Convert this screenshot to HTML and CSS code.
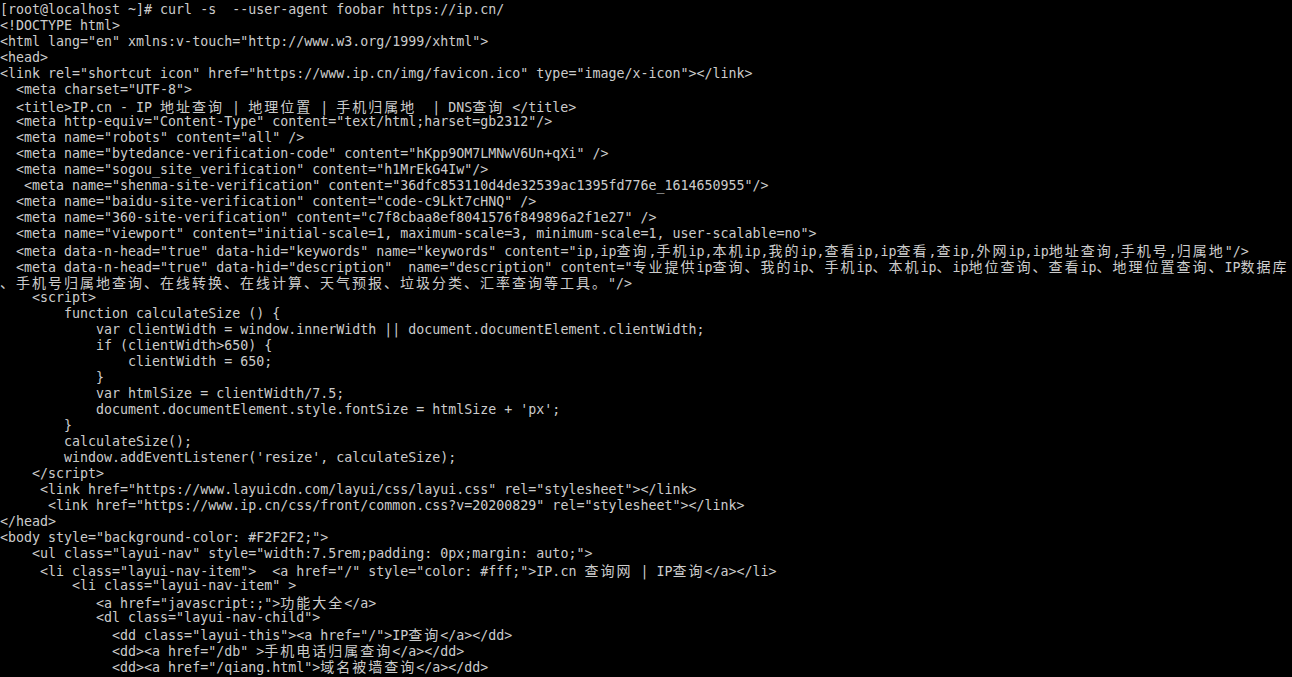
FILE: index.html
```html
<!DOCTYPE html>
<html lang="zh">
<head>
<meta charset="UTF-8">
<title>terminal</title>
<link rel="stylesheet" href="styles.css">
</head>
<body>
<div class="term">
<div class="ln">[root@localhost ~]# curl -s  --user-agent foobar https://ip.cn/</div>
<div class="ln">&lt;!DOCTYPE html&gt;</div>
<div class="ln">&lt;html lang="en" xmlns:v-touch="http://www.w3.org/1999/xhtml"&gt;</div>
<div class="ln">&lt;head&gt;</div>
<div class="ln">&lt;link rel="shortcut icon" href="https://www.ip.cn/img/favicon.ico" type="image/x-icon"&gt;&lt;/link&gt;</div>
<div class="ln">  &lt;meta charset="UTF-8"&gt;</div>
<div class="ln">  &lt;title&gt;IP.cn - IP <span class="w">地址查询</span> | <span class="w">地理位置</span> | <span class="w">手机归属地</span>  | DNS<span class="w">查询</span> &lt;/title&gt;</div>
<div class="ln">  &lt;meta http-equiv="Content-Type" content="text/html;harset=gb2312"/&gt;</div>
<div class="ln">  &lt;meta name="robots" content="all" /&gt;</div>
<div class="ln">  &lt;meta name="bytedance-verification-code" content="hKpp9OM7LMNwV6Un+qXi" /&gt;</div>
<div class="ln">  &lt;meta name="sogou_site_verification" content="h1MrEkG4Iw"/&gt;</div>
<div class="ln">   &lt;meta name="shenma-site-verification" content="36dfc853110d4de32539ac1395fd776e_1614650955"/&gt;</div>
<div class="ln">  &lt;meta name="baidu-site-verification" content="code-c9Lkt7cHNQ" /&gt;</div>
<div class="ln">  &lt;meta name="360-site-verification" content="c7f8cbaa8ef8041576f849896a2f1e27" /&gt;</div>
<div class="ln">  &lt;meta name="viewport" content="initial-scale=1, maximum-scale=3, minimum-scale=1, user-scalable=no"&gt;</div>
<div class="ln">  &lt;meta data-n-head="true" data-hid="keywords" name="keywords" content="ip,ip<span class="w">查询</span>,<span class="w">手机</span>ip,<span class="w">本机</span>ip,<span class="w">我的</span>ip,<span class="w">查看</span>ip,ip<span class="w">查看</span>,<span class="w">查</span>ip,<span class="w">外网</span>ip,ip<span class="w">地址查询</span>,<span class="w">手机号</span>,<span class="w">归属地</span>"/&gt;</div>
<div class="ln">  &lt;meta data-n-head="true" data-hid="description"  name="description" content="<span class="w">专业提供</span>ip<span class="w">查询、我的</span>ip<span class="w">、手机</span>ip<span class="w">、本机</span>ip<span class="w">、</span>ip<span class="w">地位查询、查看</span>ip<span class="w">、地理位置查询、</span>IP<span class="w">数据库</span></div>
<div class="ln"><span class="w">、手机号归属地查询、在线转换、在线计算、天气预报、垃圾分类、汇率查询等工具。</span>"/&gt;</div>
<div class="ln">    &lt;script&gt;</div>
<div class="ln">        function calculateSize () {</div>
<div class="ln">            var clientWidth = window.innerWidth || document.documentElement.clientWidth;</div>
<div class="ln">            if (clientWidth&gt;650) {</div>
<div class="ln">                clientWidth = 650;</div>
<div class="ln">            }</div>
<div class="ln">            var htmlSize = clientWidth/7.5;</div>
<div class="ln">            document.documentElement.style.fontSize = htmlSize + 'px';</div>
<div class="ln">        }</div>
<div class="ln">        calculateSize();</div>
<div class="ln">        window.addEventListener('resize', calculateSize);</div>
<div class="ln">    &lt;/script&gt;</div>
<div class="ln">     &lt;link href="https://www.layuicdn.com/layui/css/layui.css" rel="stylesheet"&gt;&lt;/link&gt;</div>
<div class="ln">      &lt;link href="https://www.ip.cn/css/front/common.css?v=20200829" rel="stylesheet"&gt;&lt;/link&gt;</div>
<div class="ln">&lt;/head&gt;</div>
<div class="ln">&lt;body style="background-color: #F2F2F2;"&gt;</div>
<div class="ln">    &lt;ul class="layui-nav" style="width:7.5rem;padding: 0px;margin: auto;"&gt;</div>
<div class="ln">     &lt;li class="layui-nav-item"&gt;  &lt;a href="/" style="color: #fff;"&gt;IP.cn <span class="w">查询网</span> | IP<span class="w">查询</span>&lt;/a&gt;&lt;/li&gt;</div>
<div class="ln">         &lt;li class="layui-nav-item" &gt;</div>
<div class="ln">            &lt;a href="javascript:;"&gt;<span class="w">功能大全</span>&lt;/a&gt;</div>
<div class="ln">            &lt;dl class="layui-nav-child"&gt;</div>
<div class="ln">              &lt;dd class="layui-this"&gt;&lt;a href="/"&gt;IP<span class="w">查询</span>&lt;/a&gt;&lt;/dd&gt;</div>
<div class="ln">              &lt;dd&gt;&lt;a href="/db" &gt;<span class="w">手机电话归属查询</span>&lt;/a&gt;&lt;/dd&gt;</div>
<div class="ln">              &lt;dd&gt;&lt;a href="/qiang.html"&gt;<span class="w">域名被墙查询</span>&lt;/a&gt;&lt;/dd&gt;</div>
</div>
</body>
</html>
```
FILE: styles.css
```css
html, body {
  margin: 0;
  padding: 0;
  background: #000;
  height: 677px;
  overflow: hidden;
}

.term {
  padding-top: 2px;
  color: #cccccc;
  font-family: "DejaVu Sans Mono", "Liberation Mono", monospace;
  font-size: 13.3px;
  line-height: 16px;
}

.ln {
  height: 16px;
  white-space: pre;
  overflow: visible;
}

.w {
  font-family: "Noto Sans CJK SC", "DejaVu Sans", sans-serif;
  font-size: 14px;
  letter-spacing: 2px;
  line-height: 16px;
}
```
